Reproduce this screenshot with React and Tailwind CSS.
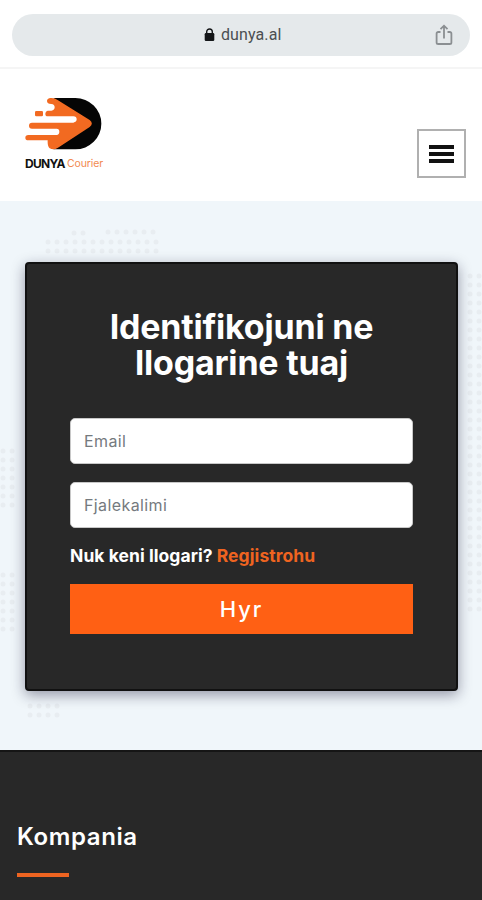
import React, { useState } from "react";

// Blocks of the dotted world map: first dot, columns and rows
const MAP_DOTS = [
  { x: 74, y: 32, cols: 2, rows: 1 },
  { x: 108, y: 31, cols: 6, rows: 1 },
  { x: 48, y: 41, cols: 13, rows: 2 },
  { x: 470, y: 75, cols: 2, rows: 38 },
  { x: 3, y: 250, cols: 2, rows: 7 },
  { x: 3, y: 374, cols: 2, rows: 7 },
  { x: 30, y: 505, cols: 4, rows: 2 },
];

const MapBackground = () => (
  <svg
    className="absolute inset-0 h-full w-full"
    viewBox="0 0 482 549"
    fill="#e8edf1"
    aria-hidden="true"
  >
    {MAP_DOTS.map((block, i) =>
      Array.from({ length: block.cols * block.rows }, (_, n) => (
        <circle
          key={`${i}-${n}`}
          cx={block.x + (n % block.cols) * 9}
          cy={block.y + Math.floor(n / block.cols) * 9}
          r="2.5"
        />
      )),
    )}
  </svg>
);

const Logo = () => (
  <div className="w-[80px]">
    <svg className="h-[53px] w-[77px]" viewBox="45 36 231 159">
      <path d="M130 39H196A78 77 0 0 1 196 193H130L228 115Z" fill="#050505" />
      <path
        d="M122 39Q134 38 144 46L239 105Q252 115 239 126L144 188Q131 197 119 190Q112 184 113 166H55Q46 166 46 158Q46 150 55 150H140Q148 149 148 140Q148 131 140 131H66Q57 131 57 122Q57 113 66 113H190Q200 111 200 103Q200 94 190 94H113Q106 94 106 86Q106 79 113 77H124Q134 76 134 67Q134 58 124 57Q111 57 111 48Q111 40 122 39Z"
        fill="#f26a21"
      />
      <rect x="75" y="78" width="24" height="16" rx="4" fill="#f26a21" />
    </svg>
    <div className="mt-[6px] flex items-center gap-[2px] whitespace-nowrap leading-[16px]">
      <span className="text-[12px] font-bold tracking-[-0.7px] text-[#111]">
        DUNYA
      </span>
      <span className="text-[10.5px] font-normal tracking-[-0.1px] text-[#f28a50]">
        Courier
      </span>
    </div>
  </div>
);

const AddressBar = () => (
  <div className="h-[69px] border-b-2 border-[#f5f5f5] px-[12px] pt-[14px]">
    <div className="flex h-[42px] items-center rounded-full bg-[#e5e9eb] pr-[17px] pl-[192px]">
      <svg className="h-[14px] w-[11px]" viewBox="0 0 11 14" fill="none">
        <rect x="0.7" y="5" width="9.6" height="8" rx="1.2" fill="#151719" />
        <path
          d="M2.7 6V3.8a2.8 2.8 0 0 1 5.6 0V6"
          stroke="#151719"
          strokeWidth="1.4"
        />
      </svg>
      <span className="ml-[6px] font-['Roboto',sans-serif] text-[16px] tracking-[0.1px] text-[#4b4f52]">
        dunya.al
      </span>
      <svg
        className="ml-auto h-[22px] w-[18px]"
        viewBox="0 0 18 22"
        fill="none"
        stroke="#8b8f92"
        strokeWidth="1.8"
      >
        <path d="M5.5 8H3.2A1.6 1.6 0 0 0 1.6 9.6V18.4A1.6 1.6 0 0 0 3.2 20H14.8A1.6 1.6 0 0 0 16.4 18.4V9.6A1.6 1.6 0 0 0 14.8 8H12.5" />
        <path d="M9 14.5V2M5.5 5.2L9 1.7L12.5 5.2" />
      </svg>
    </div>
  </div>
);

const LoginForm = () => {
  const [email, setEmail] = useState("");
  const [password, setPassword] = useState("");

  return (
    <form
      className="relative h-[429px] rounded-[4px] border-2 border-[#111] bg-[#282828] px-[43px] pt-[45px] shadow-[0_4px_14px_rgba(20,20,50,0.42)]"
      onSubmit={(e) => e.preventDefault()}
    >
      <h1 className="text-center text-[34px] leading-[36px] font-bold tracking-[-0.2px] whitespace-nowrap text-white">
        <span className="block">Identifikojuni ne</span>
        <span className="block">llogarine tuaj</span>
      </h1>
      <input
        type="email"
        value={email}
        onChange={(e) => setEmail(e.target.value)}
        placeholder="Email"
        className="mt-[37px] block h-[46px] w-full rounded-[5px] border border-[#c8c8c8] bg-white px-[13px] text-[16px] tracking-[0.4px] placeholder:text-[#757a7e]"
      />
      <input
        type="password"
        value={password}
        onChange={(e) => setPassword(e.target.value)}
        placeholder="Fjalekalimi"
        className="mt-[18px] block h-[46px] w-full rounded-[5px] border border-[#c8c8c8] bg-white px-[13px] text-[16px] tracking-[0.4px] placeholder:text-[#757a7e]"
      />
      <p className="mt-[16px] text-[17.5px] leading-[24px] font-bold tracking-[0.05px] whitespace-nowrap text-white">
        Nuk keni llogari? <a className="text-[#ef6420]">Regjistrohu</a>
      </p>
      <button
        type="submit"
        className="mt-[16px] h-[50px] w-full bg-[#ff6014] text-[22px] font-medium tracking-[2px] text-white"
      >
        Hyr
      </button>
    </form>
  );
};

export default function App() {
  return (
    <div className="flex h-[900px] w-[482px] flex-col overflow-hidden bg-white font-['Inter',sans-serif]">
      <AddressBar />

      <header className="flex h-[132px] items-start justify-between pr-[16px] pl-[25px]">
        <div className="pt-[28px]">
          <Logo />
        </div>
        <button
          className="mt-[60px] flex h-[49px] w-[49px] flex-col items-center justify-center gap-[3px] border-2 border-[#b0b0b0]"
          aria-label="Menu"
        >
          <span className="h-[4px] w-[25px] bg-[#111]" />
          <span className="h-[4px] w-[25px] bg-[#111]" />
          <span className="h-[4px] w-[25px] bg-[#111]" />
        </button>
      </header>

      <main className="relative h-[549px] bg-[#f0f6fa] px-[25px] pt-[61px] pr-[24px]">
        <MapBackground />
        <LoginForm />
      </main>

      <footer className="flex-1 border-t-2 border-[#151515] bg-[#282828] px-[17px] pt-[68px]">
        <h2 className="text-[24px] leading-[34px] font-semibold tracking-[0.6px] text-white">
          Kompania
        </h2>
        <div className="mt-[19px] h-[4px] w-[52px] bg-[#ee6421]" />
      </footer>
    </div>
  );
}
